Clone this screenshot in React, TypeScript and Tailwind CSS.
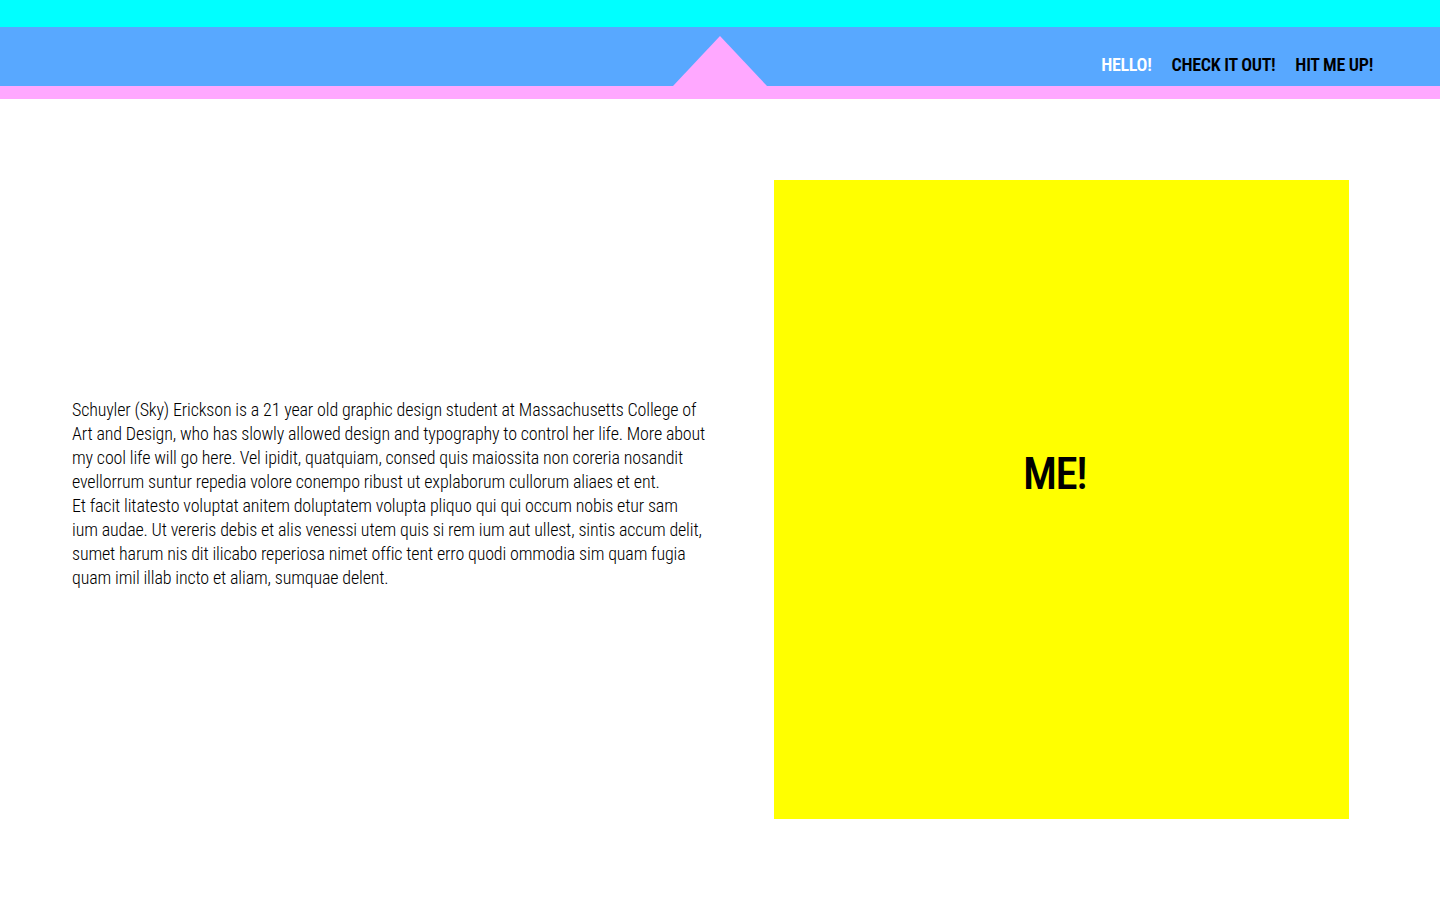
import React from "react";

const lines = [
  "Schuyler (Sky) Erickson is a 21 year old graphic design student at Massachusetts College of",
  "Art and Design, who has slowly allowed design and typography to control her life. More about",
  "my cool life will go here. Vel ipidit, quatquiam, consed quis maiossita non coreria nosandit",
  "evellorrum suntur repedia volore conempo ribust ut explaborum cullorum aliaes et ent.",
  "Et facit litatesto voluptat anitem doluptatem volupta pliquo qui qui occum nobis etur sam",
  "ium audae. Ut vereris debis et alis venessi utem quis si rem ium aut ullest, sintis accum delit,",
  "sumet harum nis dit ilicabo reperiosa nimet offic tent erro quodi ommodia sim quam fugia",
  "quam imil illab incto et aliam, sumquae delent.",
];

export default function App() {
  return (
    <div className="min-h-[900px] bg-white font-['Roboto',sans-serif] font-stretch-condensed">
      <header className="flex flex-col">
        <div className="h-[27px] bg-[#00FFFF]" />
        <div className="relative h-[59px] bg-[#58A8FF] flex items-center justify-end pr-[67px] pt-[15px] gap-[20px]">
          <svg className="absolute left-[673px] bottom-0" width="94" height="50" viewBox="0 0 94 50">
            <polygon points="47,0 94,50 0,50" fill="#FFA8FF" />
          </svg>
          <a className="text-[18px] font-semibold tracking-[-0.3px] text-white">HELLO!</a>
          <a className="text-[18px] font-semibold tracking-[-0.3px] text-black">CHECK IT OUT!</a>
          <a className="text-[18px] font-semibold tracking-[-0.3px] text-black">HIT ME UP!</a>
        </div>
        <div className="h-[13px] bg-[#FFA8FF]" />
      </header>
      <main className="flex pl-[72px] pt-[81px]">
        <div className="w-[702px] flex flex-col justify-center pb-[12px] text-[18px] leading-[24px] font-light tracking-[-0.15px] text-black">
          {lines.map((l, i) => (
            <span key={i} className="block whitespace-nowrap">{l}</span>
          ))}
        </div>
        <div className="w-[575px] h-[639px] bg-[#FFFF00] flex items-center justify-center pb-[52px] pr-[14px]">
          <span className="text-[45px] font-medium leading-none tracking-[-1.5px] text-black">ME!</span>
        </div>
      </main>
    </div>
  );
}
